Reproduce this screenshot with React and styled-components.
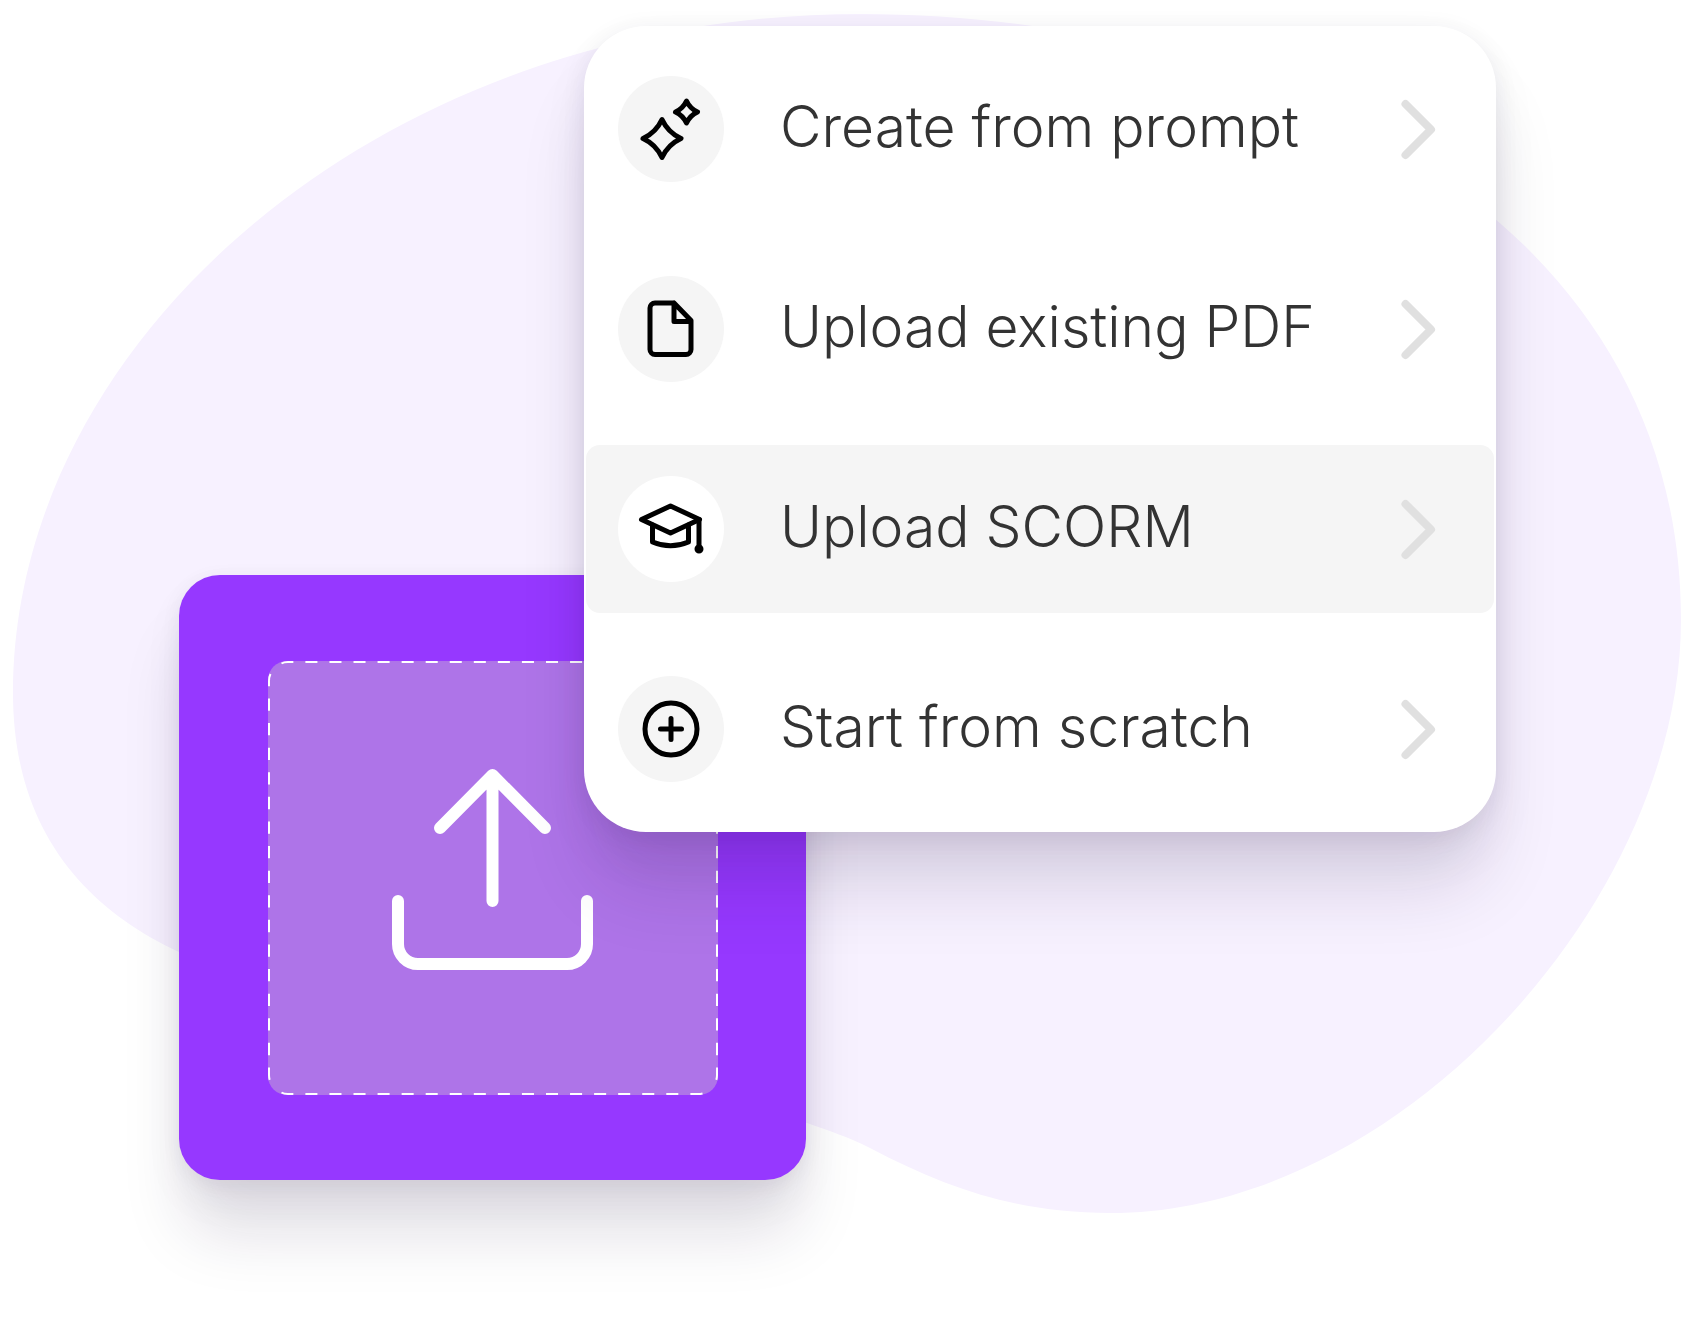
import React, { useState } from 'react';
import styled, { createGlobalStyle } from 'styled-components';

const items = [
    { id: 'prompt', label: 'Create from prompt', icon: <SparklesIcon /> },
    { id: 'pdf', label: 'Upload existing PDF', icon: <FileIcon /> },
    { id: 'scorm', label: 'Upload SCORM', icon: <CapIcon /> },
    { id: 'scratch', label: 'Start from scratch', icon: <PlusIcon /> },
];

export default function App() {
    const [active, setActive] = useState('scorm');

    return (
        <>
            <GlobalStyle />
            <Scene>
                <Blob viewBox="0 0 1692 1325" aria-hidden="true">
                    <path d="M13 693C13 340 380 14 862 14C1254 14 1681 206 1681 620C1681 900 1400 1213 1110 1213C1020 1213 950 1190 870 1148C848 1137 830 1131 807 1123C600 1055 400 1050 179 952C85 908 13 830 13 693Z" />
                </Blob>

                <UploadCard>
                    <DropZone type="button" aria-label="Upload a file">
                        <Dashes />
                        <UploadIcon />
                    </DropZone>
                </UploadCard>

                <Menu>
                    {items.map((item) => (
                        <li key={item.id}>
                            <MenuItem
                                type="button"
                                $active={item.id === active}
                                onClick={() => setActive(item.id)}
                            >
                                <IconCircle $active={item.id === active}>{item.icon}</IconCircle>
                                <Label>{item.label}</Label>
                                <Chevron viewBox="0 0 34 60" aria-hidden="true">
                                    <path d="M3.500 5L29 30.500L3.500 56" />
                                </Chevron>
                            </MenuItem>
                        </li>
                    ))}
                </Menu>
            </Scene>
        </>
    );
}

function SparklesIcon() {
    return (
        <Icon viewBox="0 0 64 64" aria-hidden="true">
            <path d="M23 22.500q6 13 19 19q-13 6-19 19q-6-13-19-19q13-6 19-19z" />
            <path d="M47.500 4q3.500 7.500 11 11q-7.500 3.500-11 11q-3.500-7.500-11-11q7.500-3.500 11-11z" />
        </Icon>
    );
}

function FileIcon() {
    return (
        <Icon viewBox="0 0 64 64" aria-hidden="true">
            <path d="M35 6H16a5 5 0 0 0-5 5v41.500a5 5 0 0 0 5 5h31a5 5 0 0 0 5-5V23.500L35 6v18.500h17" />
        </Icon>
    );
}

function CapIcon() {
    return (
        <Icon viewBox="0 0 64 64" aria-hidden="true">
            <path d="M2.500 22.500L31.500 9L60.500 22.500L31.500 36Z" />
            <path d="M13.500 28v17q18 7.500 36 0V28" />
            <path d="M60 22.500V52" />
            <circle cx="60" cy="52" r="2" />
        </Icon>
    );
}

function PlusIcon() {
    return (
        <Icon viewBox="0 0 64 64" aria-hidden="true">
            <circle cx="32" cy="32" r="26" />
            <path d="M32 21.500v21M21.500 32h21" />
        </Icon>
    );
}

function UploadIcon() {
    return (
        <UploadArrow viewBox="0 0 201 201" aria-hidden="true">
            <path d="M6 132v43a20 20 0 0 0 20 20h149a20 20 0 0 0 20-20v-43" />
            <path d="M100.500 132V6M48 59L100.500 6L153 59" />
        </UploadArrow>
    );
}

// each side is dashed on its own so that the corners come out symmetrical
function Dashes() {
    return (
        <DashedFrame viewBox="0 0 450 434" aria-hidden="true">
            <g strokeDasharray="12.030 12.030">
                <path d="M13.500 2.500Q16 1 20 1H430Q434 1 437 2.500" />
                <path d="M13.500 431.500Q16 433 20 433H430Q434 433 437 431.500" />
            </g>
            <g strokeDasharray="12.300 12.300">
                <path d="M2.500 13Q1 16 1 20V414Q1 418 2.500 421" />
                <path d="M447.500 13Q449 16 449 20V414Q449 418 447.500 421" />
            </g>
        </DashedFrame>
    );
}

const GlobalStyle = createGlobalStyle`
    * {
        box-sizing: border-box;
    }

    body {
        margin: 0;
        background: #fff;
        font-family: Inter, Lato, sans-serif;
    }

    button {
        border: 0;
        font: inherit;
        cursor: pointer;
    }
`;

const Scene = styled.main`
    position: relative;
    display: grid;
    grid-template-columns: 179fr 405fr 222fr 690fr 196fr;
    align-items: start;
    min-height: 100vh;
    padding-top: 26px;
    overflow: hidden;
`;

const Blob = styled.svg`
    position: absolute;
    top: 0;
    left: 0;
    width: 100%;
    fill: #f7f1ff;
`;

const UploadCard = styled.section`
    position: relative;
    display: flex;
    grid-row: 1;
    grid-column: 2 / 4;
    aspect-ratio: 627 / 605;
    margin-top: 549px;
    padding: 86px 88px 85px 89px;
    border-radius: 41px;
    background: #9638ff;
    box-shadow:
        0 4px 20px rgba(30, 15, 60, 0.06),
        0 20px 40px rgba(30, 15, 60, 0.05),
        0 60px 64px -6px rgba(30, 15, 60, 0.13);
`;

const DropZone = styled.button`
    position: relative;
    display: flex;
    flex: 1;
    align-items: center;
    justify-content: center;
    padding: 0 1px 18px 0;
    border-radius: 19px;
    background: #ae74e8;
`;

const DashedFrame = styled.svg`
    position: absolute;
    top: 0;
    left: 0;
    width: 100%;
    height: 100%;
    fill: none;
    stroke: #fff;
    stroke-width: 2;
`;

const UploadArrow = styled.svg`
    width: 201px;
    fill: none;
    stroke: #fff;
    stroke-width: 12;
    stroke-linecap: round;
    stroke-linejoin: round;
`;

const Menu = styled.ul`
    position: relative;
    display: flex;
    flex-direction: column;
    gap: 32px;
    grid-row: 1;
    grid-column: 3 / 5;
    margin: 0;
    padding: 19px 2px;
    list-style: none;
    border-radius: 62px;
    background: #fff;
    box-shadow:
        0 4px 24px rgba(30, 15, 60, 0.07),
        0 24px 48px rgba(30, 15, 60, 0.06),
        0 64px 72px -6px rgba(30, 15, 60, 0.12);
`;

const MenuItem = styled.button`
    display: flex;
    align-items: center;
    gap: 56px;
    width: 100%;
    height: 168px;
    padding: 0 58px 0 32px;
    border-radius: 14px;
    background: ${({ $active }) => ($active ? '#f5f5f5' : 'transparent')};
    color: #333;
    text-align: left;
`;

const IconCircle = styled.span`
    display: flex;
    flex: none;
    align-items: center;
    justify-content: center;
    width: 106px;
    height: 106px;
    border-radius: 50%;
    background: ${({ $active }) => ($active ? '#fff' : '#f5f5f5')};
`;

const Icon = styled.svg`
    width: 64px;
    height: 64px;
    overflow: visible;
    fill: none;
    stroke: #000;
    stroke-width: 5;
    stroke-linecap: round;
    stroke-linejoin: round;
`;

const Label = styled.span`
    flex: 1;
    padding-bottom: 4px;
    font-size: 57px;
    font-weight: 300;
    line-height: 72px;
    white-space: nowrap;
`;

const Chevron = styled.svg`
    flex: none;
    width: 34px;
    height: 60px;
    overflow: visible;
    fill: none;
    stroke: #e0e0e0;
    stroke-width: 8;
    stroke-linecap: round;
    stroke-linejoin: round;
`;
